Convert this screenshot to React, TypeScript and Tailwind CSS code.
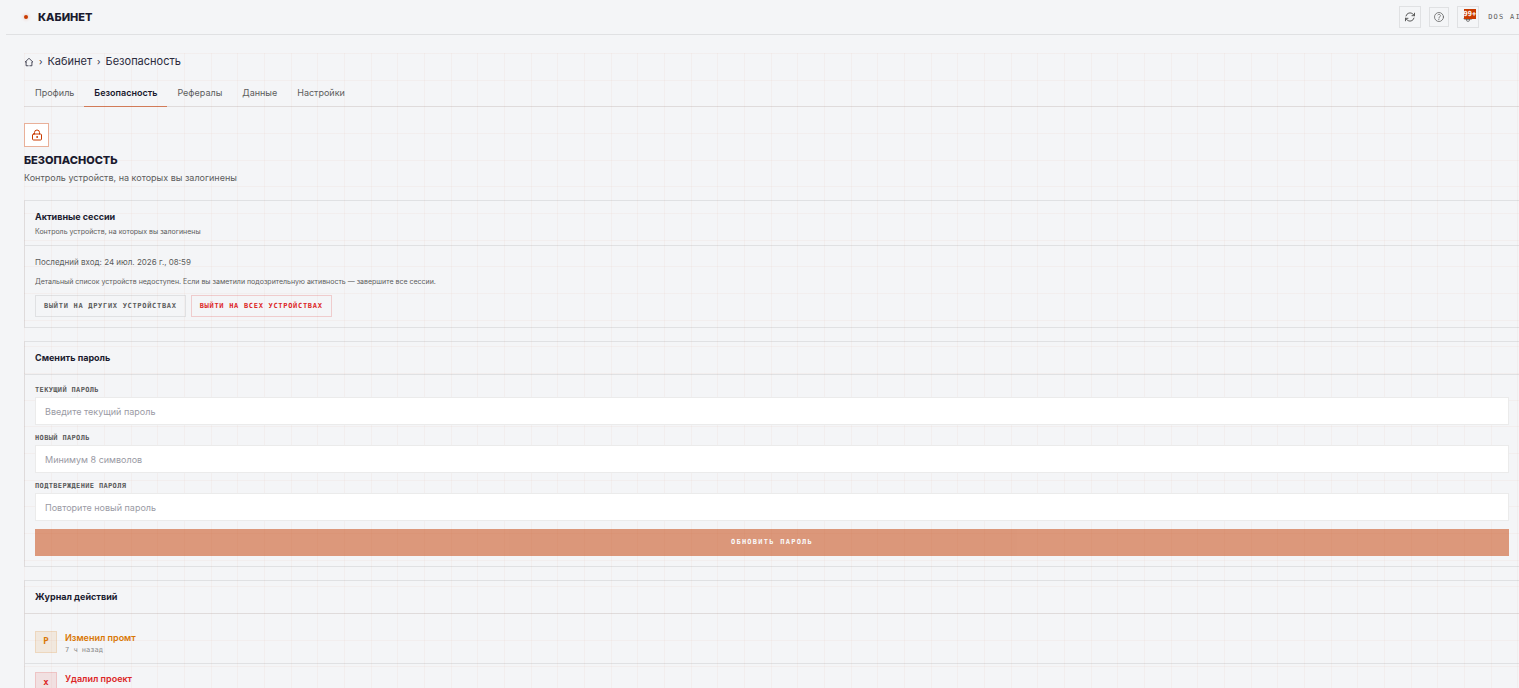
import { HiOutlineArrowPath, HiOutlineBell, HiOutlineQuestionMarkCircle } from "react-icons/hi2";
import { LockKeyhole } from "lucide-react";
import type { ReactNode } from "react";

const MONO = "font-['DejaVu_Sans_Mono',monospace]";

const tabs = ["Профиль", "Безопасность", "Рефералы", "Данные", "Настройки"];

const fields = [
  { id: "current", label: "Текущий пароль", placeholder: "Введите текущий пароль" },
  { id: "next", label: "Новый пароль", placeholder: "Минимум 8 символов" },
  { id: "confirm", label: "Подтверждение пароля", placeholder: "Повторите новый пароль" },
];

const log = [
  {
    mark: "P",
    title: "Изменил промт",
    time: "7 ч назад",
    box: "border-[#d97706]/15 bg-[#d97706]/10 text-[#d97706]",
    text: "text-[#d97706]",
  },
  {
    mark: "x",
    title: "Удалил проект",
    time: "7 ч назад",
    box: "border-[#dc2626]/15 bg-[#dc2626]/10 text-[#dc2626]",
    text: "text-[#dc2626]",
  },
];

function HomeIcon() {
  return (
    <svg
      viewBox="0 0 24 24"
      className="size-[10px]"
      fill="none"
      stroke="currentColor"
      strokeWidth="2"
      strokeLinecap="round"
      strokeLinejoin="round"
      aria-hidden="true"
    >
      <path d="M5 12H3l9-9 9 9h-2v9h-5M10 21H5v-9" />
    </svg>
  );
}

function Card({ title, subtitle, children }: { title: string; subtitle?: string; children: ReactNode }) {
  return (
    <section className="border border-black/8">
      <div className={subtitle ? "border-b border-black/8 px-[10px] pt-[10px] pb-2" : "border-b border-black/8 p-[10px]"}>
        <h2 className="text-[9px] leading-3 font-bold text-[#1a1a2e]">{title}</h2>
        {subtitle && <p className="mt-1 text-[7px] leading-[10px] text-[#5c5c5c]">{subtitle}</p>}
      </div>
      {children}
    </section>
  );
}

function Header() {
  return (
    <header className="-mr-0.5 ml-[6px] flex h-[35px] items-center border-b border-black/8 pl-[18px]">
      <span className="mr-[10px] size-1 rounded-full bg-[#c93a00] shadow-[0_0_3px_1px_rgba(201,58,0,0.15)]" />
      <h1 className="text-[11px] font-extrabold text-[#1a1a2e]">КАБИНЕТ</h1>
      <div className="ml-auto flex shrink-0 items-center gap-2 text-[#5c5c5c]">
        <button aria-label="Обновить" className="flex size-[22px] items-center justify-center border border-black/8">
          <HiOutlineArrowPath className="size-3" strokeWidth={2} />
        </button>
        <button aria-label="Помощь" className="flex size-5 items-center justify-center border border-black/8">
          <HiOutlineQuestionMarkCircle className="size-3" />
        </button>
        <button aria-label="Уведомления" className="relative flex size-[22px] items-center justify-center border border-black/8">
          <HiOutlineBell className="size-3" />
          <span
            className={`absolute top-[2px] right-[2px] flex h-[10px] w-3 items-center justify-end overflow-hidden bg-[#c93a00] text-[7px] leading-[10px] font-bold text-white ${MONO}`}
          >
            99+
          </span>
        </button>
        <span className={`ml-px text-[7px] tracking-[0.18em] whitespace-nowrap ${MONO}`}>DOS AI</span>
      </div>
    </header>
  );
}

export default function App() {
  return (
    <div className="min-h-screen overflow-hidden bg-[#f4f5f7] font-['Inter',sans-serif] text-[#1a1a2e]">
      <Header />
      <main className="mt-[18px] -mr-px ml-6 bg-[linear-gradient(to_right,rgba(201,58,0,0.035)_1px,transparent_1px,transparent_27px,rgba(201,58,0,0.035)_27px,rgba(201,58,0,0.035)_28px,transparent_28px,transparent_53px,rgba(201,58,0,0.035)_53px,rgba(201,58,0,0.035)_54px,transparent_54px),linear-gradient(to_bottom,rgba(201,58,0,0.035)_1px,transparent_1px,transparent_27px,rgba(201,58,0,0.035)_27px,rgba(201,58,0,0.035)_28px,transparent_28px,transparent_53px,rgba(201,58,0,0.035)_53px,rgba(201,58,0,0.035)_54px,transparent_54px)] bg-size-[80px_80px]">
        <nav aria-label="Путь" className="flex h-[17px] items-center gap-[5px] text-[11px] text-[#2a2a3c]">
          <a href="#home" aria-label="Главная">
            <HomeIcon />
          </a>
          <span className="text-[9px]">›</span>
          <a href="#cabinet">Кабинет</a>
          <span className="text-[9px]">›</span>
          <span>Безопасность</span>
        </nav>

        <nav aria-label="Разделы" className="mt-[10px] flex h-[27px] border-b border-black/8 pl-px text-[9px] text-[#5c5c5c]">
          {tabs.map((tab) => (
            <a
              key={tab}
              href={`#${tab}`}
              className={
                tab === "Безопасность"
                  ? "-mb-px flex items-center border-b border-[#c93a00]/60 px-[10px] font-semibold text-[#1a1a2e]"
                  : "-mb-px flex items-center border-b border-transparent px-[10px]"
              }
            >
              {tab}
            </a>
          ))}
        </nav>

        <div className="mt-4 flex h-6 w-[25px] items-center justify-center border border-[#c93a00]/40 bg-white text-[#c93a00]">
          <LockKeyhole className="size-3" strokeWidth={2} />
        </div>
        <h2 className="mt-[6px] text-[11px] leading-[14px] font-extrabold">БЕЗОПАСНОСТЬ</h2>
        <p className="mt-1 text-[9px] leading-[14px] text-[#5c5c5c]">Контроль устройств, на которых вы залогинены</p>

        <div className="mt-[15px] flex flex-col gap-[13px]">
          <Card title="Активные сессии" subtitle="Контроль устройств, на которых вы залогинены">
            <div className="p-[10px] text-[#5c5c5c]">
              <p className="text-[8px] leading-3">Последний вход: 24 июл. 2026 г., 08:59</p>
              <p className="mt-2 text-[7px] leading-3">
                Детальный список устройств недоступен. Если вы заметили подозрительную активность — завершите все сессии.
              </p>
              <div className={`mt-[7px] flex gap-[5px] text-[7px] font-bold tracking-widest ${MONO}`}>
                <button className="h-[22px] border border-black/8 px-2 uppercase">Выйти на других устройствах</button>
                <button className="h-[22px] border border-[#dc2626]/20 px-2 text-[#dc2626] uppercase">
                  Выйти на всех устройствах
                </button>
              </div>
            </div>
          </Card>

          <Card title="Сменить пароль">
            <form className="p-[10px]" onSubmit={(e) => e.preventDefault()}>
              {fields.map((f) => (
                <div key={f.id} className="mb-2">
                  <label
                    htmlFor={f.id}
                    className={`mb-[2px] block text-[7px] leading-[10px] font-bold tracking-wider text-[#5c5c5c] uppercase ${MONO}`}
                  >
                    {f.label}
                  </label>
                  <input
                    id={f.id}
                    type="password"
                    placeholder={f.placeholder}
                    className="block h-7 w-full border border-black/8 bg-white px-[9px] text-[9px] placeholder:text-[#9a9aa4]"
                  />
                </div>
              ))}
              <button
                className={`block h-[27px] w-full bg-[#c43c00] text-[7px] font-bold tracking-[0.18em] text-white uppercase opacity-50 ${MONO}`}
              >
                Обновить пароль
              </button>
            </form>
          </Card>

          <Card title="Журнал действий">
            <ul className="pt-[9px]">
              {log.map((item) => (
                <li key={item.title} className="flex h-[41px] items-start gap-2 border-b border-black/8 px-[10px] pt-2">
                  <span className={`flex size-[22px] items-center justify-center border text-[9px] font-bold ${item.box} ${MONO}`}>
                    {item.mark}
                  </span>
                  <div>
                    <p className={`text-[9px] leading-[14px] font-semibold ${item.text}`}>{item.title}</p>
                    <p className={`text-[7px] leading-[10px] text-[#8a8a8a] ${MONO}`}>{item.time}</p>
                  </div>
                </li>
              ))}
            </ul>
          </Card>
        </div>
      </main>
    </div>
  );
}
